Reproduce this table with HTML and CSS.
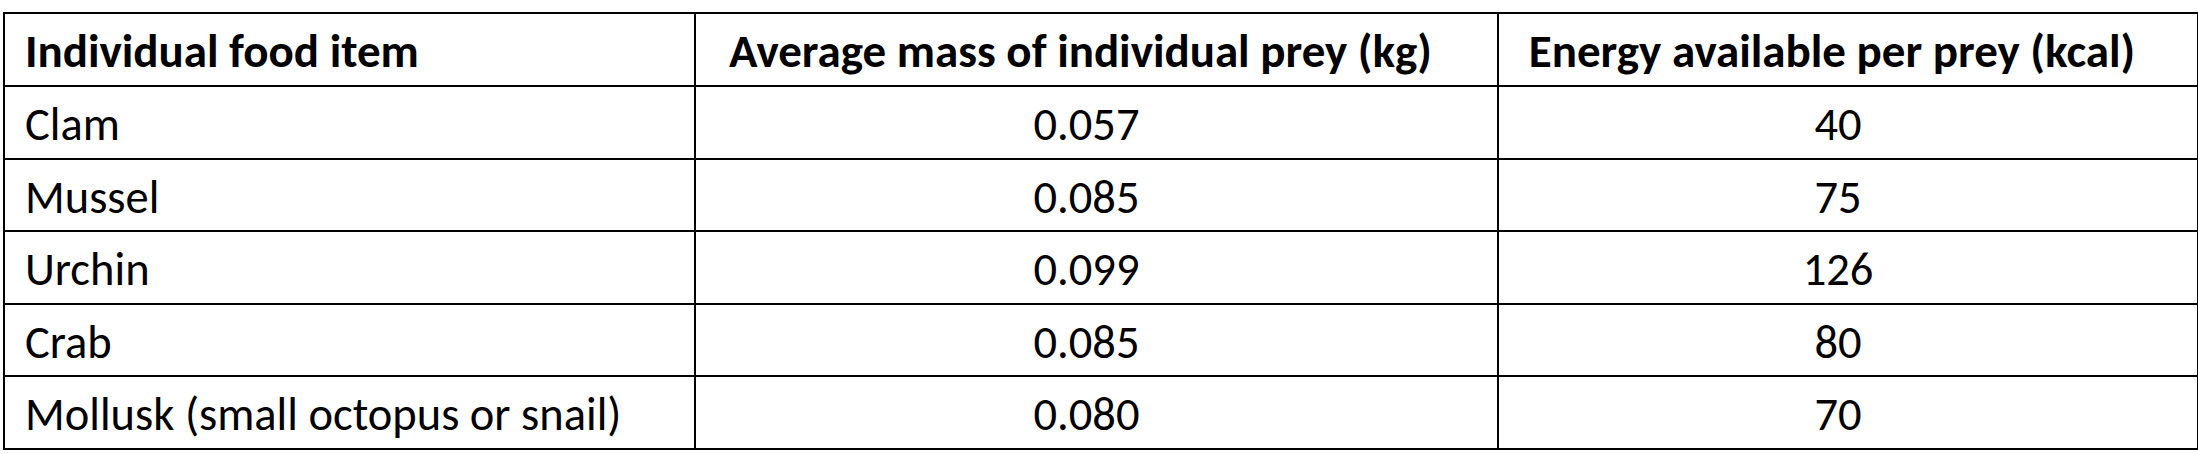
FILE: index.html
```html
<!DOCTYPE html>
<html lang="en">
<head>
<meta charset="utf-8">
<title>Prey energy table</title>
<link rel="stylesheet" href="styles.css">
</head>
<body>
<div class="page">
  <table class="prey">
    <colgroup>
      <col class="c1">
      <col class="c2">
      <col class="c3">
    </colgroup>
    <thead>
      <tr class="r-head">
        <th class="name">Individual food item</th>
        <th class="num-h">Average mass of individual prey (kg)</th>
        <th class="num-h">Energy available per prey (kcal)</th>
      </tr>
    </thead>
    <tbody>
      <tr class="r-a"><td class="name">Clam</td><td class="num">0.057</td><td class="num">40</td></tr>
      <tr class="r-b"><td class="name">Mussel</td><td class="num">0.085</td><td class="num">75</td></tr>
      <tr class="r-a"><td class="name">Urchin</td><td class="num">0.099</td><td class="num">126</td></tr>
      <tr class="r-b"><td class="name">Crab</td><td class="num">0.085</td><td class="num">80</td></tr>
      <tr class="r-a"><td class="name">Mollusk (small octopus or snail)</td><td class="num">0.080</td><td class="num">70</td></tr>
    </tbody>
  </table>
</div>
</body>
</html>
```

FILE: styles.css
```css
html, body {
  margin: 0;
  padding: 0;
  background: #ffffff;
}

.page {
  padding: 12px 0 0 3px;
}

.prey {
  border-collapse: collapse;
  table-layout: fixed;
  width: 2194px;
  font-family: Carlito, Calibri, Lato, "Liberation Sans", sans-serif;
  font-size: 46.5px;
  color: #000;
}

.c1 { width: 691px; }
.c2 { width: 803px; }
.c3 { width: 700px; }

.prey th,
.prey td {
  border: 2px solid #000;
  padding: 0;
  vertical-align: middle;
  line-height: 1;
  white-space: nowrap;
}

.prey th {
  font-weight: 700;
  font-size: 47px;
}

.r-head { height: 73px; }
.r-a { height: 73px; }
.r-b { height: 72px; }

.name {
  text-align: left;
  padding-left: 20px !important;
}

.num-h {
  text-align: center;
  padding-right: 32px !important;
}

.num {
  text-align: center;
  padding-right: 20px !important;
  padding-top: 4px !important;
}

td.name {
  padding-top: 4px !important;
}

th {
  padding-top: 4px !important;
}
```
